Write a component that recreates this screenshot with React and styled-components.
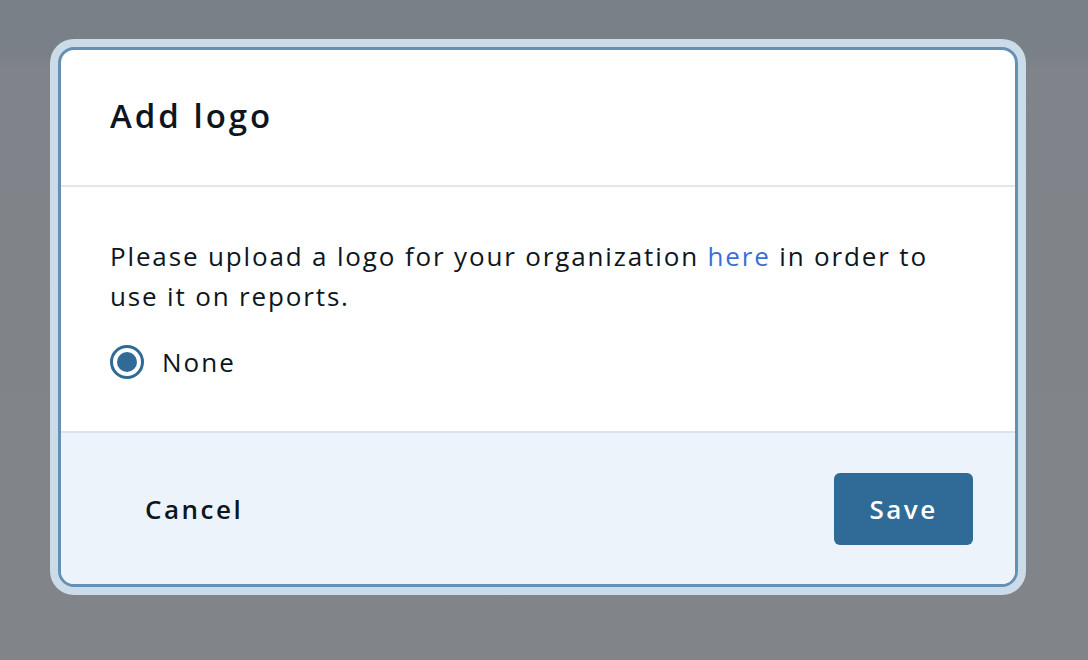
import React, { useState } from 'react';
import styled, { createGlobalStyle } from 'styled-components';

const GlobalStyle = createGlobalStyle`
  html, body {
    margin: 0;
    padding: 0;
  }
  body {
    background: linear-gradient(#7a8088 0, #7a8088 52px, #80848a 70px, #818589 100%);
    font-family: "Open Sans", "Liberation Sans", sans-serif;
    color: #0d1620;
  }
`

const Backdrop = styled.div`
  min-height: 660px;
  box-sizing: border-box;
  padding: 47px 0 0 58px;
`

const Modal = styled.div`
  width: 960px;
  height: 540px;
  box-sizing: border-box;
  display: flex;
  flex-direction: column;
  background: #fff;
  border: 3px solid #6590b5;
  border-radius: 16px;
  box-shadow: 0 0 0 8px #cbdbe8;
  overflow: hidden;
`

const Header = styled.header`
  height: 137px;
  flex-shrink: 0;
  display: flex;
  align-items: center;
  padding: 0 48px 4px 49px;
  box-sizing: border-box;
  border-bottom: 2px solid #e4e6ee;
`

const Title = styled.h2`
  margin: 0;
  font-size: 33px;
  font-weight: 600;
  letter-spacing: 3px;
`

const Body = styled.div`
  flex: 1;
  padding: 49px 40px 0 49px;
  display: flex;
  flex-direction: column;
  gap: 28px;
`

const Text = styled.p`
  margin: 0;
  font-size: 26px;
  line-height: 40px;
  letter-spacing: 1.85px;
`

const Link = styled.a`
  color: #3a6fd6;
  text-decoration: none;
`

const RadioRow = styled.label`
  display: flex;
  align-items: center;
  gap: 18px;
  font-size: 26px;
  letter-spacing: 2px;
  cursor: pointer;
`

const RadioMark = styled.span`
  width: 34px;
  height: 34px;
  box-sizing: border-box;
  border-radius: 50%;
  border: 3px solid #2f6b96;
  display: flex;
  align-items: center;
  justify-content: center;
  &::after {
    content: '';
    width: 20px;
    height: 20px;
    border-radius: 50%;
    background: ${p => (p.checked ? '#2f6b96' : 'transparent')};
  }
`

const Footer = styled.footer`
  height: 153px;
  flex-shrink: 0;
  box-sizing: border-box;
  display: flex;
  align-items: center;
  justify-content: space-between;
  padding: 0 42px 0 49px;
  background: #ecf3fa;
  border-top: 2px solid #d8e4ef;
`

const Button = styled.button`
  height: 72px;
  padding: 0 ${p => (p.primary ? '0' : '35px')};
  border: none;
  border-radius: 6px;
  font-family: inherit;
  font-size: 26px;
  font-weight: 600;
  letter-spacing: 2.5px;
  cursor: pointer;
  background: ${p => (p.primary ? '#2f6b96' : 'transparent')};
  color: ${p => (p.primary ? '#fff' : '#0d1620')};
  width: ${p => (p.primary ? '139px' : 'auto')};
`

export default function App() {
  const [logo, setLogo] = useState('none');

  return (
    <>
      <GlobalStyle />
      <Backdrop>
        <Modal>
          <Header>
            <Title>Add logo</Title>
          </Header>
          <Body>
            <Text>
              Please upload a logo for your organization <Link href="#">here</Link> in order to
              use it on reports.
            </Text>
            <RadioRow onClick={() => setLogo('none')}>
              <RadioMark checked={logo === 'none'} />
              None
            </RadioRow>
          </Body>
          <Footer>
            <Button>Cancel</Button>
            <Button primary>Save</Button>
          </Footer>
        </Modal>
      </Backdrop>
    </>
  );
}
